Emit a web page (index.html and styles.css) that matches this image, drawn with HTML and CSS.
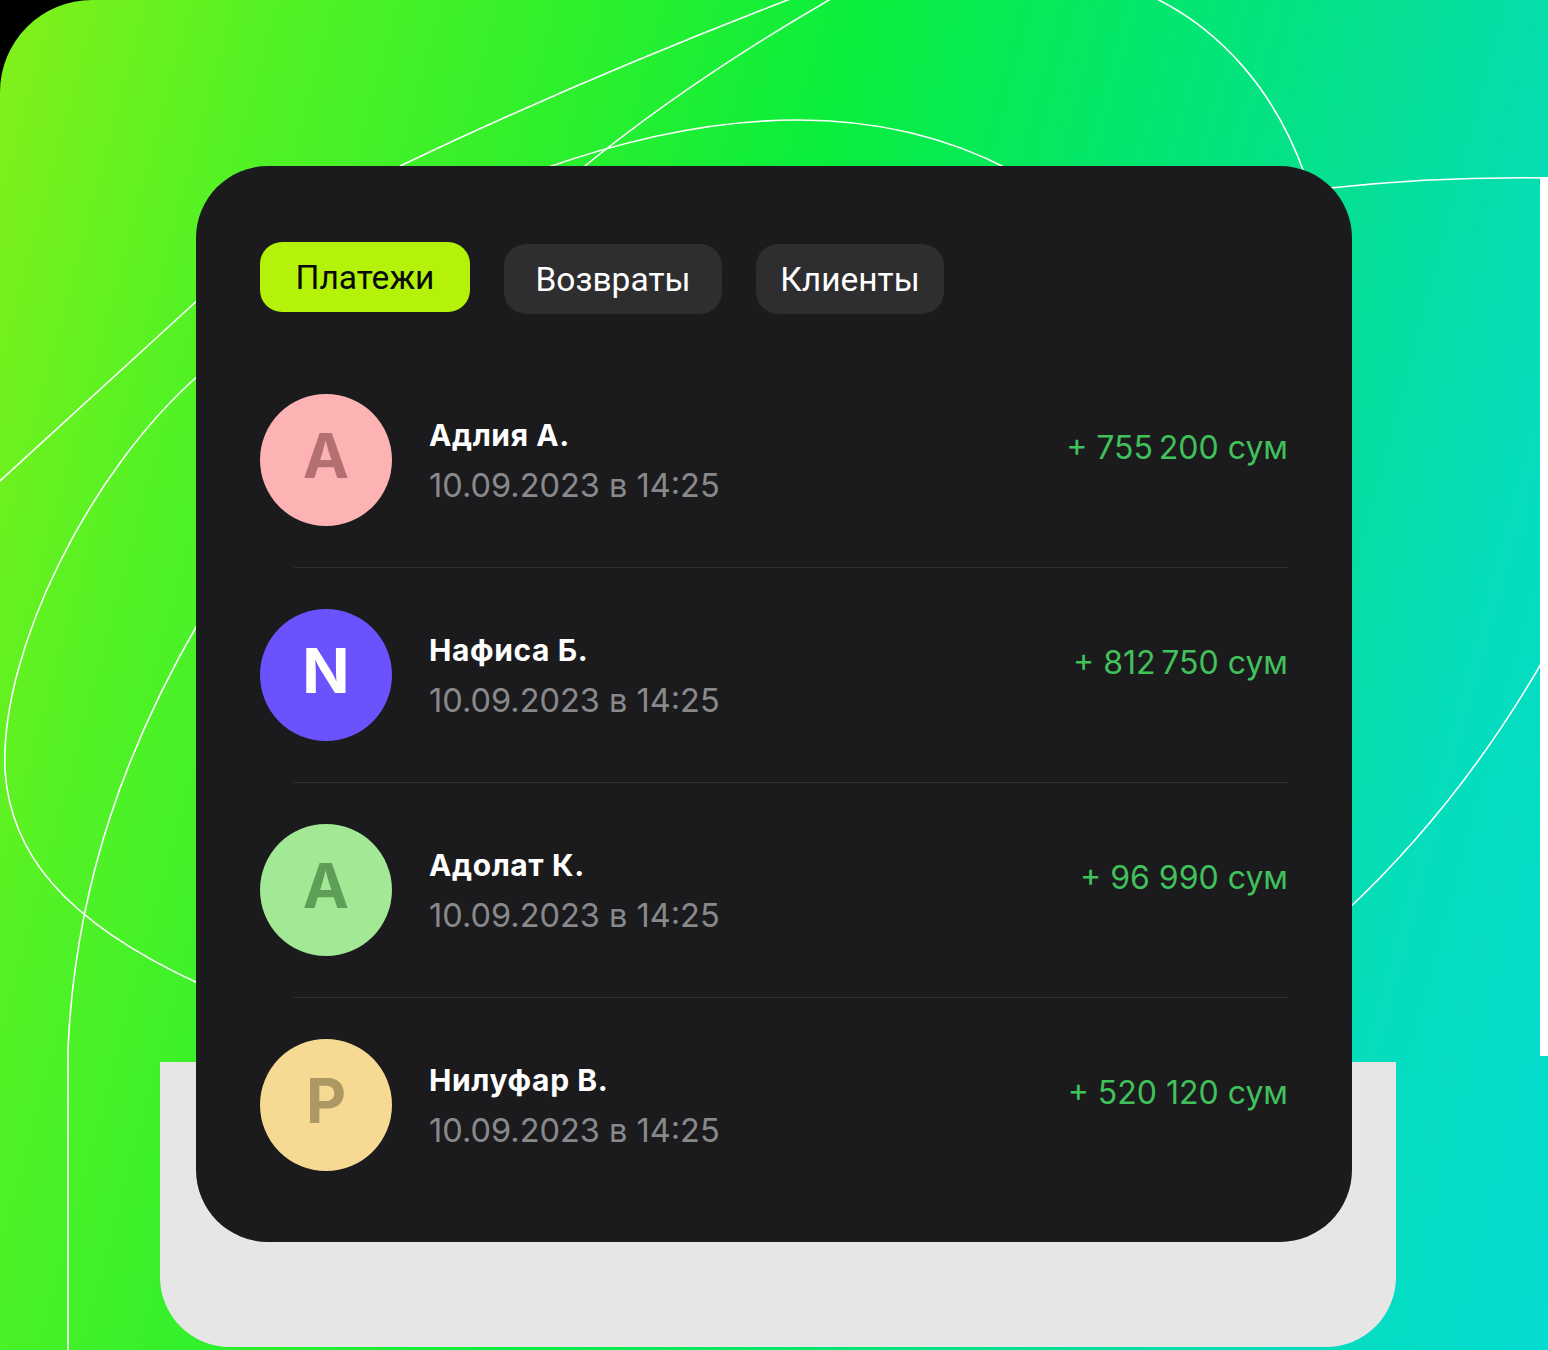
FILE: index.html
```html
<!DOCTYPE html>
<html lang="ru">
<head>
<meta charset="utf-8">
<title>Платежи</title>
<link rel="stylesheet" href="styles.css">
</head>
<body>
<div class="stage">
  <svg class="lines" width="1548" height="1350" viewBox="0 0 1548 1350" aria-hidden="true">
    <path d="M 400 166 Q 580 80 798 -4"/>
    <path d="M 540 170 Q 820 70 1010 170"/>
    <path d="M 580 170 Q 690 80 836 -4"/>
    <path d="M 1155 -2 C 1220 30 1275 90 1305 175"/>
    <path d="M 1330 188 Q 1440 176 1550 178"/>
    <path d="M 1550 648 Q 1465 800 1345 912"/>
    <path d="M 200 298 L -10 490"/>
    <path d="M 200 374 C 90 470 0 650 5 770 C 10 850 60 920 200 984"/>
    <path d="M 200 620 C 130 740 75 880 68 1050 L 68 1352"/>
  </svg>
  <div class="edge-strip"></div>
  <div class="shadow"></div>

  <div class="card">
    <div class="tabs">
      <div class="tab tab-active tab-w1">Платежи</div>
      <div class="tab tab-w2">Возвраты</div>
      <div class="tab tab-w3">Клиенты</div>
    </div>

    <div class="list">
      <div class="row">
        <div class="avatar av-pink">A</div>
        <div class="info">
          <div class="name">Адлия А.</div>
          <div class="date">10.09.2023 в 14:25</div>
        </div>
        <div class="amount">+ 755&#8239;200 сум</div>
      </div>
      <div class="divider"></div>
      <div class="row">
        <div class="avatar av-violet">N</div>
        <div class="info">
          <div class="name">Нафиса Б.</div>
          <div class="date">10.09.2023 в 14:25</div>
        </div>
        <div class="amount">+ 812&#8239;750 сум</div>
      </div>
      <div class="divider"></div>
      <div class="row">
        <div class="avatar av-green">A</div>
        <div class="info">
          <div class="name">Адолат К.</div>
          <div class="date">10.09.2023 в 14:25</div>
        </div>
        <div class="amount">+ 96 990 сум</div>
      </div>
      <div class="divider"></div>
      <div class="row">
        <div class="avatar av-yellow">P</div>
        <div class="info">
          <div class="name">Нилуфар В.</div>
          <div class="date">10.09.2023 в 14:25</div>
        </div>
        <div class="amount">+ 520 120 сум</div>
      </div>
    </div>
  </div>
</div>
</body>
</html>
```

FILE: styles.css
```css
* { box-sizing: border-box; }

html, body {
  margin: 0;
  padding: 0;
  background: #000;
}

.stage {
  position: relative;
  width: 1548px;
  height: 1350px;
  overflow: hidden;
  border-top-left-radius: 92px;
  background: linear-gradient(105deg,
    #84f01a 0%,
    #55f224 14%,
    #30f02c 30%,
    #0aee3c 45%,
    #03e670 62%,
    #05df95 74%,
    #05ddbe 87%,
    #06dbcf 100%);
  padding: 166px 0 0 196px;
  font-family: Inter, "Noto Sans", sans-serif;
}

.lines {
  position: absolute;
  left: 0;
  top: 0;
  fill: none;
  stroke: #ffffff;
  stroke-width: 1.6;
}

.edge-strip {
  position: absolute;
  left: 1540px;
  top: 177px;
  width: 8px;
  height: 879px;
  background: #ffffff;
}

.shadow {
  position: absolute;
  left: 160px;
  top: 1062px;
  width: 1236px;
  height: 285px;
  background: #e6e6e6;
  border-radius: 0 0 70px 70px;
}

.card {
  position: relative;
  width: 1156px;
  height: 1076px;
  background: #1b1b1d;
  border-radius: 72px;
  padding: 76px 64px 32px 64px;
}

.tabs {
  display: flex;
  align-items: flex-start;
  gap: 34px;
  height: 72px;
  margin-bottom: 39px;
}

.tab {
  height: 70px;
  margin-top: 2px;
  border-radius: 22px;
  background: #2e2e30;
  color: #ffffff;
  font-family: Roboto, "Liberation Sans", sans-serif;
  font-size: 33.5px;
  display: flex;
  align-items: center;
  justify-content: center;
}

.tab-active {
  margin-top: 0;
  background: #b4f20a;
  color: #0a0a0a;
}

.tab-w1 { width: 210px; }
.tab-w2 { width: 218px; }
.tab-w3 { width: 188px; }

.row {
  display: flex;
  align-items: center;
  padding: 41px 0;
}

.divider {
  height: 1px;
  background: #303032;
  margin-left: 34px;
}

.avatar {
  width: 132px;
  height: 132px;
  flex: none;
  border-radius: 50%;
  display: flex;
  align-items: center;
  justify-content: center;
  font-size: 62px;
  font-weight: 700;
  padding-bottom: 10px;
  margin-right: 37px;
}

.av-pink { background: #fdb3b3; color: #b46f70; }
.av-violet { background: #6a53fc; color: #ffffff; }
.av-green { background: #a3e895; color: #5f9e56; }
.av-yellow { background: #f6d993; color: #ad9762; }

.info {
  display: flex;
  flex-direction: column;
  margin-top: 4px;
}

.name {
  color: #ffffff;
  font-size: 30px;
  font-weight: 700;
  letter-spacing: 0.6px;
  line-height: 34px;
  margin-bottom: 14px;
}

.date {
  color: #89898c;
  font-size: 32.5px;
  font-weight: 400;
  line-height: 40px;
}

.amount {
  margin-left: auto;
  margin-bottom: 24px;
  color: #41c15a;
  font-size: 32px;
  line-height: 40px;
  white-space: nowrap;
}
```
